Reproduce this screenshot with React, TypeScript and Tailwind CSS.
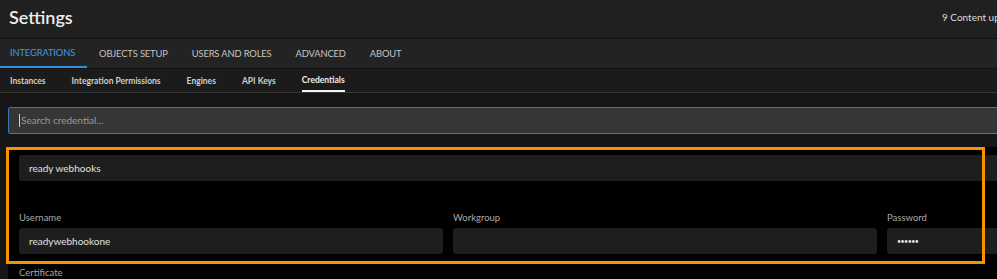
const mainTabs = ["Integrations", "Objects Setup", "Users and Roles", "Advanced", "About"];
const subTabs = ["Instances", "Integration Permissions", "Engines", "API Keys", "Credentials"];

function Field({ label, value, secret }: { label?: string; value?: string; secret?: boolean }) {
    return (
        <div className="flex flex-col">
            {label && <label className="mb-[5px] text-[9.5px] leading-[11px] text-[#a8a8a8]">{label}</label>}
            <div
                className={
                    secret
                        ? "flex h-[26px] items-center rounded-[3px] bg-[#1e1e1e] pl-[10px] text-[7px] tracking-[-0.5px] text-[#e2e2e2]"
                        : "flex h-[26px] items-center rounded-[3px] bg-[#1e1e1e] pl-[10px] text-[10px] text-[#e2e2e2]"
                }
            >
                {value}
            </div>
        </div>
    );
}

export default function App() {
    return (
        <div
            className="h-[279px] w-full overflow-hidden bg-[#161616]"
            style={{ fontFamily: "Lato, 'Open Sans', sans-serif" }}
        >
            <header className="flex h-[39px] items-center justify-between border-b border-[#131313] bg-[#202020] pb-[3px] pl-[9px]">
                <h1 className="text-[18px] font-semibold text-[#ececec]">Settings</h1>
                <div className="w-[55px] overflow-hidden whitespace-nowrap text-[10px] text-[#dcdcdc]">
                    9 Content updates
                </div>
            </header>

            <nav className="flex h-[30px] items-stretch border-b border-[#111] bg-[#232323]">
                {mainTabs.map((tab, i) => (
                    <div
                        key={tab}
                        className={
                            i === 0
                                ? "flex items-center border-b-2 border-[#2f8fe0] pl-[10px] pr-[12px] pt-[2px] text-[9.4px] uppercase tracking-[-0.15px] text-[#3a9be6]"
                                : "flex items-center px-[12px] pt-[2px] text-[9.4px] uppercase tracking-[-0.15px] text-[#c4c4c4]"
                        }
                    >
                        {tab}
                    </div>
                ))}
            </nav>

            <nav className="flex h-[24px] items-stretch gap-[26px] border-b border-[#383838] bg-[#1b1b1b] pl-[10px]">
                {subTabs.map((tab) => (
                    <div
                        key={tab}
                        className={
                            tab === "Credentials"
                                ? "flex items-center border-b-2 border-[#f2f2f2] pt-[2px] text-[8.5px] font-bold text-[#f0f0f0]"
                                : "flex items-center pt-[2px] text-[8.5px] font-bold text-[#cfcfcf]"
                        }
                    >
                        {tab}
                    </div>
                ))}
            </nav>

            <div className="pl-[8px] pt-[14px]">
                <div className="flex h-[27px] w-[1100px] items-center rounded-[2px] border border-[#3c78b8] bg-[#363636] pl-[10px] text-[10px] text-[#9a9a9a]">
                    <span className="mr-[1px] h-[13px] w-px bg-[#cfcfcf]" />
                    Search credential...
                </div>

                <div className="relative mt-[13px] w-[1303px] bg-black pb-[20px] pl-[11px] pt-[8px]">
                    <Field value="ready webhooks" />
                    <div className="mt-[31px] grid grid-cols-3 gap-x-[10px]">
                        <Field label="Username" value="readywebhookone" />
                        <Field label="Workgroup" />
                        <Field label="Password" value="••••••" secret />
                    </div>
                    <div className="mt-[12px] text-[9.5px] text-[#a8a8a8]">Certificate</div>
                    <div className="absolute left-[-2px] top-0 h-[117px] w-[979px] border-[3px] border-[#f59300]" />
                </div>
            </div>
        </div>
    );
}
